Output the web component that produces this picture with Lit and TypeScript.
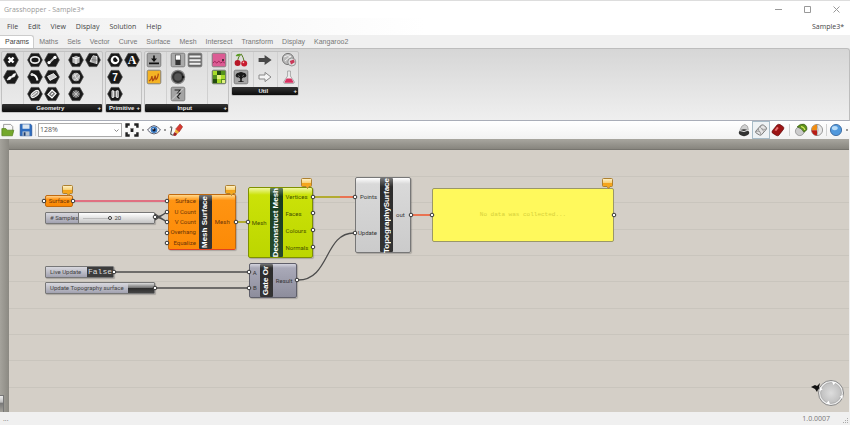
import { LitElement, html, svg, css, nothing } from "lit";
import { customElement, property } from "lit/decorators.js";

const hexGlyphs: Record<string, unknown> = {
  cross: svg`<path d="M5.5 5.5l5 5M10.5 5.5l-5 5" stroke="#fff" stroke-width="2.4"/>`,
  needle: svg`<path d="M4 11l2-3 3-1 1.4-2 2.4-.4-1.2 3-3 1-1.4 1.8z" fill="#fff" stroke="#fff" stroke-width=".6"/>`,
  ring: svg`<ellipse cx="8" cy="8" rx="4.4" ry="3.1" fill="none" stroke="#e8e8e8" stroke-width="1.7"/>`,
  line: svg`<path d="M5 11l6-6" stroke="#ccc" stroke-width="1.8"/><circle cx="5" cy="10.6" r="1.6" fill="#fff"/><circle cx="11" cy="5.4" r="1.6" fill="#fff"/>`,
  arc: svg`<path d="M4.5 5.5q5 0 6 6" fill="none" stroke="#fff" stroke-width="2"/><circle cx="5" cy="5.4" r="1.5" fill="#ddd"/>`,
  plane: svg`<path d="M3.6 7.4l6-2.8 3 3.4-6.6 3.4z" fill="#ccc" stroke="#fff" stroke-width=".8"/>`,
  orbit: svg`<ellipse cx="8" cy="8" rx="4.6" ry="2.5" transform="rotate(-38 8 8)" fill="#999" stroke="#fff"/><path d="M5 10l5-4" stroke="#fff"/>`,
  diamond: svg`<path d="M8 4l4 3.6L8 12 4 8.4z" fill="#777" stroke="#fff" stroke-width="1.2"/><path d="M7 8.6l2-1.4" stroke="#fff" stroke-width="1.2"/>`,
  box: svg`<path d="M4.4 5.4L8 3.8l3.6 1.4v5.2L8 12.2l-3.6-1.8z" fill="#bbb"/><path d="M4.4 5.4L8 6.8l3.6-1.6M8 6.8v5.2" fill="none" stroke="#fff" stroke-width=".9"/>`,
  sheet: svg`<path d="M5 9.6l3-5.8 4 .8v7z" fill="#bbb" stroke="#fff" stroke-width=".8"/><path d="M8 4v7M10 4.4v7M6.6 7.6l5.4.6" stroke="#555" stroke-width=".5"/>`,
  sphere: svg`<circle cx="8" cy="8" r="4.2" fill="#aaa"/><path d="M5 7.5q3-1 4.4-3.4M6 11q4-1 5.6-4.6M6.6 4.5q.4 4 3.6 7" fill="none" stroke="#eee" stroke-width=".8"/>`,
  grid: svg`<circle cx="8" cy="8" r="3.8" fill="#666"/><path d="M4.4 8h7.2M8 4.4v7.2M5.4 5.4l5.2 5.2M10.6 5.4l-5.2 5.2" stroke="#ccc" stroke-width=".8"/>`,
  half: svg`<circle cx="8" cy="8" r="4.3" fill="#fff"/><path d="M8.4 5.2a2.4 2.4 0 1 0 2.4 3z" fill="#111"/>`,
  letter: svg`<text x="8" y="12.2" text-anchor="middle" font-family="Liberation Serif, serif" font-size="12" font-weight="700" fill="#fff">A</text>`,
  seven: svg`<text x="8" y="11.8" text-anchor="middle" font-family="Liberation Sans, sans-serif" font-size="10" font-weight="700" fill="#fff">7</text>`,
  domain: svg`<path d="M5 4.8h1.6v6.6H5zM9.6 4.8h1.6v6.6H9.6z" fill="#777" stroke="#fff" stroke-width=".9"/><path d="M8 5v6" stroke="#fff" stroke-width=".8"/>`,
};

const tile = (fill: string, inner: unknown) => svg`<rect x="1.2" y="1.2" width="13.6" height="13.6" rx="1.4" fill=${fill} stroke="#777" stroke-width=".9"/>${inner}`;

const plainGlyphs: Record<string, unknown> = {
  button: tile("#a4a4a4", svg`<path d="M7.2 3.5h1.6v3H11L8 10 5 6.5h2.2zM3 10.6h10v1.6H3z" fill="#111"/>`),
  graph: tile("#f4b324", svg`<path d="M3 12q2.4-1 3-5l.6 4.6q2-1 2.6-5l.8 4q1.6-1 2.4-6" fill="none" stroke="#b04a10" stroke-width="1.2"/>`),
  toggle: tile("#aaa", svg`<rect x="5.4" y="3" width="5.2" height="5" fill="#fff" stroke="#333" stroke-width=".6"/><rect x="5.4" y="8" width="5.2" height="5" fill="#333"/>`),
  list: tile("#666", svg`<path d="M2.4 4.6h11.2M2.4 8.2h11.2M2.4 11.8h11.2" stroke="#eee" stroke-width="2"/>`),
  knob: svg`<circle cx="8" cy="8" r="6.6" fill="#333" stroke="#888" stroke-width="1.3"/><circle cx="8" cy="8" r="3.8" fill="#555"/><path d="M12 6.6l3 1.4-3 1.4z" fill="#111"/>`,
  script: tile("#a4a4a4", svg`<path d="M4.6 4h5.6L7.6 7.2h2.6L7.4 10.6l2 2" fill="none" stroke="#222" stroke-width="1.1"/><path d="M2 13.6l11-11" stroke="#ddd" stroke-width=".8"/>`),
  swatch: tile("#dc5c94", svg`<path d="M1.8 11l2-1.6 2 1.6 2-1.8 2 1.8 2-1.4 2 1.4" fill="none" stroke="#a02458"/><circle cx="12" cy="8" r="1" fill="#222"/>`),
  pixels: tile("#54921c", svg`<path d="M2 2h4v4H2zM10 6h4v4h-4zM6 10h4v4H6z" fill="#a8dc28"/><path d="M6 2h4v4H6zM2 10h4v4H2z" fill="#234c10"/><path d="M6 6h4v4H6zM11 11h3v3h-3z" fill="#e0f080"/>`),
  cherry: svg`<path d="M4.6 10Q5 4 8.4 2.2q2 3 3 8" fill="none" stroke="#527a1c"/><path d="M8 2q-4-1-5.4 2Q6.4 5 8 2z" fill="#589a20"/><circle cx="4.6" cy="11" r="3" fill="#b81828"/><circle cx="11.2" cy="11.4" r="3" fill="#c81c30"/><circle cx="10.4" cy="10.4" r=".8" fill="#fbb"/>`,
  tree: tile("#a6a6a6", svg`<path d="M2.6 7q0-3 3-3.2Q8 2 10.4 3.8q3 .2 3 3.2-1 2-2.6 1.2Q9 9 8.8 10v2.2h1.8v.8H5.4v-.8h1.8V10Q7 9 5.2 8.2 3.6 9 2.6 7z" fill="#1a1a1a"/><path d="M5 6.4l2 1.4M11 6l-2 1.6" stroke="#999" stroke-width=".6"/>`),
  arrowDark: svg`<path d="M1.6 6h6V3l7 5-7 5v-3h-6z" fill="#484848"/>`,
  arrowLight: svg`<path d="M2 6h6V3.4L14 8l-6 4.6V10H2z" fill="#f4f4f4" stroke="#888" stroke-width="1"/>`,
  magnet: svg`<circle cx="7" cy="7" r="5.6" fill="#bbb" stroke="#777"/><path d="M3 5q4-3 7 0M4 9l6-5" stroke="#eee" fill="none"/><circle cx="10.8" cy="10" r="4" fill="#ddd" stroke="#777" stroke-width=".7"/><path d="M10 12.6l3.8-2.4-1-2.6-4 1.4z" fill="#c83858"/>`,
  flask: svg`<path d="M6.6 2h2.8v5l4 6q0 1.4-1.4 1.4H4q-1.4 0-1.4-1.4l4-6z" fill="#eee" stroke="#999" stroke-width=".8"/><path d="M5.6 9.4h4.8l2.2 3.8-1 .6H4.2l-.8-.6z" fill="#d83060"/>`,
};

const toolGlyphs: Record<string, unknown> = {
  open: svg`<path d="M3 7V1.6h8L13.4 4v7H3z" fill="#f8f8f8" stroke="#777" stroke-width=".8"/><path d="M1 14.6V6.4h4.6L7 8.2h7.6L13 14.6z" fill="#74a82c" stroke="#507c18" stroke-width=".8"/>`,
  save: svg`<path d="M1.4 1.4h12L14.6 3v11.6H1.4z" fill="#2c6cc0" stroke="#1c4c94" stroke-width=".8"/><path d="M4 1.6h8v5H4z" fill="#dce6f0"/><path d="M4 9.6h8v5H4z" fill="#b8c4d0"/><path d="M5.4 10.6h2v4h-2z" fill="#1c3c70"/>`,
  zoom: svg`<path d="M1.8 5.4V1.8h3.6M10.6 1.8h3.6v3.6M14.2 10.6v3.6h-3.6M5.4 14.2H1.8v-3.6" fill="none" stroke="#222" stroke-width="2.8"/><path d="M6.4 6.4l3.2 3.2M9.6 6.4L6.4 9.6" stroke="#222" stroke-width="1.6"/>`,
  eye: svg`<path d="M.6 8q7.4-10 14.8 0-7.4 9-14.8 0z" fill="#f4f8fc" stroke="#445" stroke-width="1"/><circle cx="8" cy="7.8" r="3.8" fill="#3c7cc4"/><circle cx="8" cy="7.8" r="1.8" fill="#112"/><circle cx="7" cy="6.6" r=".8" fill="#fff"/>`,
  brush: svg`<path d="M1 5q3-2 2 2t-1 6q2 2 4-1" fill="none" stroke="#222"/><path d="M7.6 7L12.6 1l3 3.4-4.2 6.2z" fill="#d83830" stroke="#882018" stroke-width=".6"/><path d="M8 7l3.4 3.4-1.8 2.2-3.2-2.6z" fill="#f0b038"/><path d="M6.2 10.2l3.2 2.2-1.6 2.2-3 .2z" fill="#a02020"/>`,
  hat: svg`<path d="M3 9q2-7 6-7.4 4 1 4 6.4z" fill="#d0d0d0" stroke="#888" stroke-width=".7"/><ellipse cx="8" cy="11" rx="6" ry="4" fill="#333"/><path d="M3 8.6q5 2.6 10-.6" stroke="#fff" fill="none"/>`,
  wire: svg`<path d="M2 9.4L7.6 3q1.6-1.4 3.2-.6l3 2.4q1 1 .2 2.4L8.6 13.4q-1.2 1-2.6.2L2.4 11.4q-1-.8-.4-2z" fill="#e4e4e4" stroke="#777" stroke-width="1.1"/><path d="M7.6 3q-.8 2.4 1.2 3.6 2 1.2 5 .4M2 9.6q3-1 4.6.4 1.2 1.2 1.2 3.4M5 6q0 3 1.6 4M8.8 6.6l2.6 3.2" fill="none" stroke="#888" stroke-width=".9"/>`,
  solid: svg`<path d="M1.4 9L6.8 2.4q1.8-1.4 3.6-.6l3.6 2.4q1.2 1.2.4 2.8L9 14q-1.4 1.2-3 .2L1.8 11.6Q.6 10.4 1.4 9z" fill="#9c1414" stroke="#500" stroke-width=".7"/><path d="M4 8.4l3-4 1.8 1.4L6 9.2z" fill="#e87070"/>`,
  preview: svg`<circle cx="6.6" cy="9.4" r="5" fill="#ccc" stroke="#777" stroke-width=".7"/><path d="M3.6 4.4Q7 .4 11.6 1.4q4 2 3 6.6L11.4 10.6Q9 6 3.6 4.4z" fill="#5c9018" stroke="#2c4c08" stroke-width=".7"/><path d="M8 4q4 1 4.4 4" stroke="#d4e860" fill="none" stroke-width="1.4"/>`,
  beach: svg`<circle cx="8" cy="8" r="6.4" fill="#e8e8e8" stroke="#777" stroke-width=".8"/><path d="M8 1.8v6.4H1.8A6.2 6.2 0 0 1 8 1.8z" fill="#f08c10"/><path d="M8 8.2v6A6.2 6.2 0 0 1 1.8 8.2z" fill="#b81c14"/><path d="M8 1.8q2.4 6 0 12.4" fill="none" stroke="#777" stroke-width=".6"/>`,
  globe: svg`<circle cx="8" cy="8" r="6.4" fill="#5098dc" stroke="#2c5c94" stroke-width=".9"/><ellipse cx="6.6" cy="5.8" rx="3.4" ry="2.4" fill="#b8dcf8"/>`,
};

function glyph(name: string) {
  return html`<svg class="icon" viewBox="0 0 16 16" aria-hidden="true">
    ${name in hexGlyphs
      ? svg`<path d="M4.2 1.4h7.6L15.4 8l-3.6 6.6H4.2L.6 8z" fill="#191919" stroke="#444" stroke-width=".7"/>${hexGlyphs[name]}`
      : plainGlyphs[name] ?? toolGlyphs[name]}
  </svg>`;
}

const groups = [
  { title: "Geometry", sets: [[["cross", "needle"]], [["ring", "arc", "orbit"], ["line", "plane", "diamond"]], [["box", "sphere", "grid"], ["sheet"]]] },
  { title: "Primitive", sets: [[["half", "seven", "domain"], ["letter"]]] },
  { title: "Input", sets: [[["button", "graph"]], [["toggle", "knob", "script"], ["list"]], [["swatch", "pixels"]]] },
  { title: "Util", sets: [[["cherry", "tree"]], [["arrowDark", "arrowLight"]], [["magnet", "flask"]]] },
];

const menus = ["File", "Edit", "View", "Display", "Solution", "Help"];
const tabs = ["Params", "Maths", "Sels", "Vector", "Curve", "Surface", "Mesh", "Intersect", "Transform", "Display", "Kangaroo2"];

@customElement("gh-ribbon")
export class GhRibbon extends LitElement {
  static styles = css`
    :host { display: flex; align-items: flex-start; gap: 2px; min-height: 69px; padding: 2px 1px 0; border: 1px solid #bdbdbd; border-left: 0; border-bottom-color: #a9adb8; border-top-right-radius: 3px; background: linear-gradient(#d6d6d6, #efefef); }
    .group { border: 1px solid #c2c2c2; border-radius: 2px; background: linear-gradient(#dcdcdc, #ececec); }
    .sets { display: flex; padding: 0 1px; }
    .set { display: flex; gap: 1px; }
    .set + .set { border-left: 1px solid #d0d0d0; margin-left: 4px; padding-left: 3px; }
    .col { display: flex; flex-direction: column; gap: 1px; margin-bottom: 2px; }
    button { display: block; width: 16px; height: 16px; padding: 0; border: 0; background: none; }
    .icon { display: block; width: 16px; height: 16px; }
    .foot { display: flex; align-items: center; height: 8px; padding: 0 1px; border-radius: 1px; background: linear-gradient(#333, #0c0c0c); color: #eee; font: 700 6px/8px "Liberation Sans", sans-serif; }
    .name { flex: 1; text-align: center; }
  `;
  render() {
    return groups.map((g) => html`<section class="group">
      <div class="sets">${g.sets.map((s) => html`<div class="set">${s.map((c) => html`<div class="col">${c.map((i) => html`<button aria-label=${i}>${glyph(i)}</button>`)}</div>`)}</div>`)}</div>
      <div class="foot"><span class="name">${g.title}</span><span>+</span></div>
    </section>`);
  }
}

@customElement("gh-node")
export class GhNode extends LitElement {
  @property() name = "";
  @property() tone = "grey";
  @property({ type: Array }) inputs: string[] = [];
  @property({ type: Array }) outputs: string[] = [];
  static styles = css`
    :host { display: flex; box-sizing: border-box; border: 1px solid #666; border-radius: 2px; font: 6px/10px Roboto, sans-serif; color: #333; box-shadow: 1px 1px 1px #0003; }
    :host([tone="orange"]) { background: linear-gradient(#ffd98e, #ff9412 10%, #fc8a06); border-color: #c06a10 #c06a10 #e04020; color: #6e3408; }
    :host([tone="lime"]) { background: linear-gradient(#f0f8a0, #cbe208 10%, #bcd600); border-color: #7f9000; color: #455000; }
    :host([tone="grey"]) { background: linear-gradient(#fff, #d9d9d9 8%, #cbcbcb); border-color: #777; }
    :host([tone="slate"]) { background: linear-gradient(#d4d4de, #a9a9b8 12%, #8d8d9c); border-color: #5f5f6a; }
    .side { flex: 1 1 0; display: flex; flex-direction: column; justify-content: space-around; padding: 1px 0; }
    .in { text-align: right; flex-grow: var(--in, 1); padding-right: 3px; }
    .out { text-align: left; flex-grow: var(--out, 1); padding-left: 3px; }
    .strip { display: grid; place-items: center; flex: none; width: 13px; border-radius: 1px; background: linear-gradient(#777, #2c2c2c 12%, #333); color: #fff; }
    :host([tone="lime"]) .strip { background: linear-gradient(#668060, #183c20 12%, #26482c); }
    .title { writing-mode: vertical-rl; transform: rotate(180deg); white-space: nowrap; font: 700 8px/12px "Liberation Sans", sans-serif; }
  `;
  render() {
    return html`<div class="side in">${this.inputs.map((t) => html`<span>${t}</span>`)}</div>
      <div class="strip"><span class="title">${this.name}</span></div>
      <div class="side out">${this.outputs.map((t) => html`<span>${t}</span>`)}</div>`;
  }
}

const ports = [[44, 62], [73, 62], [155, 78], [167, 62], [167, 73], [167, 83], [167, 94], [167, 104], [236, 83], [248, 83], [313, 58], [313, 74], [313, 91], [313, 108], [355, 58], [355, 94], [411, 76], [432, 76], [614, 76], [297, 141], [249, 133], [249, 149], [114, 133], [155, 149]];
const balloons = [[62, 46], [225, 46], [301, 39], [602, 39]];
const rows = [37, 63, 90, 116, 142, 169, 195, 221, 248];

@customElement("gh-canvas")
export class GhCanvas extends LitElement {
  static styles = css`
    :host { display: block; position: relative; overflow: hidden; background: #d4cfc7; }
    .top { height: 11px; background: linear-gradient(#a8a69f, #87857e); border-bottom: 1px solid #77756f; box-sizing: border-box; }
    .left { position: absolute; left: 0; top: 0; bottom: 0; width: 9px; background: linear-gradient(90deg, #a5a39c, #8b8982); }
    .handle { position: absolute; left: 0; bottom: 0; width: 4px; height: 17px; box-sizing: border-box; border: solid #777; border-width: 1px 1px 0 0; background: linear-gradient(#eee, #bbb 40%, #777 42%, #a5a39c); }
    .wires { position: absolute; inset: 0; width: 100%; height: 100%; fill: none; }
    .wire { stroke: #4c4c4c; stroke-width: 1.3; }
    .pink, .hot, .olive { stroke-width: 1.5; }
    .pink { stroke: #e4506a; }
    .hot { stroke: #f0562c; }
    .olive { stroke: #a8a000; }
    .item { position: absolute; box-sizing: border-box; }
    .pin { border: 1px solid #c06a10; border-radius: 2px; background: linear-gradient(#ffd08a, #ff9412 35%, #fa8804); color: #6e3408; text-align: center; }
    .pin, .bar { font: 6px/10px Roboto, sans-serif; }
    .bar { display: flex; align-items: stretch; border: 1px solid #777; border-radius: 1px; background: linear-gradient(#d8d8de, #a2a2b0); color: #444; padding: 0; box-shadow: 1px 1px 1px #0003; }
    .caption { flex: 1; text-align: left; padding-left: 4px; white-space: nowrap; }
    .rail { display: flex; width: 75px; background: linear-gradient(#fff, #c4c4c4); border-left: 1px solid #777; }
    .range { appearance: none; flex: 1; min-width: 0; height: 10px; margin: 0 0 0 4px; background: linear-gradient(#0000 5px, #bbb 5px, #bbb 6px, #0000 6px); }
    .range::-webkit-slider-thumb { appearance: none; width: 4px; height: 4px; border: 1px solid #333; border-radius: 2px; background: #fff; }
    .amount { width: 40px; padding-left: 2px; color: #444; }
    .state { width: 26px; background: #3c3c3c; color: #ddd; text-align: center; font: 8px/10px "Liberation Mono", monospace; }
    .push { width: 26px; background: linear-gradient(#ddd, #777 45%, #2c2c2c 50%, #444); }
    .panel { border: 1px solid #9a9768; border-radius: 2px; background: #fff95c; color: #d6d03a; display: grid; place-items: center; font: 6px/8px "Liberation Mono", monospace; }
    .compass { position: absolute; right: 3px; bottom: 4px; width: 36px; height: 30px; }
    .surface { left: 45px; top: 56px; width: 28px; height: 12px; }
    .samples { left: 45px; top: 73px; width: 110px; height: 12px; }
    .live { left: 45px; top: 127px; width: 69px; height: 12px; }
    .update { left: 45px; top: 143px; width: 110px; height: 12px; }
    .mesh { left: 168px; top: 55px; width: 68px; height: 56px; --in: 4; --out: 3; }
    .decon { left: 248px; top: 48px; width: 65px; height: 71px; --in: 2; --out: 3; }
    .topo { left: 355px; top: 38px; width: 56px; height: 76px; --in: 3; --out: 2; }
    .gate { left: 249px; top: 124px; width: 48px; height: 35px; --in: 1; --out: 3; }
    .note { left: 432px; top: 49px; width: 182px; height: 54px; }
  `;
  render() {
    return html`
      <div class="top"></div>
      <div class="left"></div>
      <div class="handle"></div>
      <svg class="wires">
        <g stroke="#c9c5bd">${rows.map((y) => svg`<line x1="9" x2="100%" y1=${y + 0.5} y2=${y + 0.5}/>`)}</g>
        <path class="pink" d="M75 62H166"/>
        <path class="wire" d="M155 78Q160 78 167 73M155 78Q160 78 167 83M155 75L167 83M155 81L167 73M114 133H248M156 149H248M298 141C330 141 324 94 354 94"/>
        <path class="olive" d="M237 83H248M314 58H340"/>
        <path class="hot" d="M340 58H355M412 76H432"/>
      </svg>
      <div class="item pin surface">Surface</div>
      <label class="item bar samples"><span class="caption"># Samples</span><span class="rail"><input class="range" type="range" min="0" max="20" .value=${"20"} /><span class="amount">20</span></span></label>
      <button class="item bar live"><span class="caption">Live Update</span><span class="state">False</span></button>
      <button class="item bar update"><span class="caption">Update Topography surface</span><span class="push"></span></button>
      <gh-node class="item mesh" tone="orange" name="Mesh Surface" .inputs=${["Surface", "U Count", "V Count", "Overhang", "Equalize"]} .outputs=${["Mesh"]}></gh-node>
      <gh-node class="item decon" tone="lime" name="Deconstruct Mesh" .inputs=${["Mesh"]} .outputs=${["Vertices", "Faces", "Colours", "Normals"]}></gh-node>
      <gh-node class="item topo" tone="grey" name="TopographySurface" .inputs=${["Points", "Update"]} .outputs=${["out"]}></gh-node>
      <gh-node class="item gate" tone="slate" name="Gate Or" .inputs=${["A", "B"]} .outputs=${["Result"]}></gh-node>
      <div class="item panel note">No data was collected...</div>
      <svg class="wires" pointer-events="none">
        <defs><linearGradient id="amber" x2="0" y2="1"><stop offset="0" stop-color="#fff3cc"/><stop offset=".45" stop-color="#f8d070"/><stop offset=".5" stop-color="#f4a41c"/><stop offset="1" stop-color="#f8ac20"/></linearGradient></defs>
        ${ports.map(([x, y]) => svg`<circle cx=${x} cy=${y} r="1.8" fill="#fff" stroke="#333"/>`)}
        ${balloons.map(([x, y]) => svg`<path transform=${`translate(${x} ${y})`} d="M1.5.5h8q1 0 1 1v6q0 1-1 1H8L6.5 10.5 5 8.5H1.5q-1 0-1-1v-6q0-1 1-1z" fill="url(#amber)" stroke="#ad8030"/>`)}
      </svg>
      <svg class="compass" viewBox="0 0 36 30">
        <defs><radialGradient id="dial"><stop offset="0" stop-color="#ddd"/><stop offset="1" stop-color="#c0c0c0"/></radialGradient></defs>
        <path d="M1 9l4-2 2 1 3-3-1 4 1 2-2 .5-1 2.5-2-3z" fill="#111"/>
        <circle cx="21" cy="15" r="12.5" fill="#eee" stroke="#888"/>
        <circle cx="21" cy="15" r="10.4" fill="url(#dial)" stroke="#aaa" stroke-width=".8"/>
        <path d="M22 3.6l4 .6-2.6 2.8zM33 17l-.6 4-2.6-2.4zM20 26.4l-4-.8 2.8-2.8zM9.4 13l.8-4 2.4 2.6z" fill="#fff"/>
      </svg>`;
  }
}

@customElement("app-root")
export class AppRoot extends LitElement {
  static styles = css`
    :host { display: flex; flex-direction: column; min-height: 100vh; box-sizing: border-box; border-top: 1px solid #ddd; background: #f0f0f0; font: 7px/10px "Open Sans", sans-serif; color: #444; }
    button { font: inherit; color: inherit; border: 0; background: none; padding: 0; }
    .title { display: flex; align-items: center; justify-content: space-between; height: 17px; padding: 0 10px 0 4px; background: #fff; color: #999; }
    .window { display: flex; gap: 22px; }
    .window svg { display: block; width: 7px; height: 7px; fill: none; stroke: #999; }
    .menu { display: flex; align-items: center; gap: 10px; height: 17px; padding: 0 6px 0 7px; background: linear-gradient(90deg, #f0f0f0, #fff 50%); }
    .doc { margin-left: auto; }
    .tabs { display: flex; align-items: center; height: 13px; font: 7px/10px "Liberation Sans", sans-serif; color: #777; }
    .tabs button { height: 13px; padding: 0 4px 0 5px; }
    .tabs .active { background: #fff; border: 1px solid #ccc; border-width: 1px 1px 0 0; border-radius: 0 3px 0 0; color: #444; }
    .tools { display: flex; align-items: center; gap: 2px; height: 18px; padding: 0 1px; background: linear-gradient(#fff, #f2f2f2); }
    .icon { display: block; width: 14px; height: 14px; }
    .save { margin-left: 2px; }
    .sep { width: 1px; height: 12px; background: #d0d0d0; }
    .wide { margin: 0 2px; }
    .zoomlevel { appearance: none; width: 84px; height: 14px; box-sizing: border-box; padding: 0 1px; border: 1px solid #aaa; border-radius: 0; color: #555; font: 7px/12px "Open Sans", sans-serif; background: #fff; }
    .combo { display: grid; align-items: center; margin-right: 1px; }
    .combo > * { grid-area: 1 / 1; }
    .chevron { justify-self: end; width: 5px; height: 3px; margin-right: 3px; fill: none; stroke: #888; pointer-events: none; }
    .dot { width: 2px; height: 2px; background: #999; margin: 0 1px; }
    .right { display: flex; align-items: center; gap: 2px; margin-left: auto; }
    .framed { padding: 1px; outline: 1px solid #a8bcc8; background: #eef2f4; }
    gh-canvas { flex: 1; margin-right: 1px; }
    .status { display: flex; align-items: center; justify-content: space-between; height: 13px; padding: 0 1px 0 3px; color: #777; }
    .version { display: flex; align-items: flex-end; gap: 13px; }
    .grip { width: 6px; height: 6px; fill: #aaa; }
  `;
  private tool(name: string, extra = "") {
    return html`<button class=${extra || nothing} aria-label=${name}>${glyph(name)}</button>`;
  }
  render() {
    return html`
      <header class="title"><span>Grasshopper - Sample3*</span>
        <div class="window">
          <button aria-label="Minimize"><svg viewBox="0 0 7 7"><path d="M0 3.5h7"/></svg></button>
          <button aria-label="Maximize"><svg viewBox="0 0 7 7"><path d="M.5.5h6v6h-6z"/></svg></button>
          <button aria-label="Close"><svg viewBox="0 0 7 7"><path d="M.5.5l6 6M6.5.5l-6 6"/></svg></button>
        </div>
      </header>
      <nav class="menu">${menus.map((m) => html`<button>${m}</button>`)}<span class="doc">Sample3*</span></nav>
      <nav class="tabs">${tabs.map((t, i) => html`<button class=${i ? nothing : "active"}>${t}</button>`)}</nav>
      <gh-ribbon></gh-ribbon>
      <div class="tools">
        ${this.tool("open")}${this.tool("save", "save")}
        <span class="sep"></span>
        <div class="combo"><select class="zoomlevel" aria-label="Zoom level"><option>128%</option></select>
          <svg class="chevron" viewBox="0 0 5 3"><path d="M.5.5l2 2 2-2"/></svg></div>
        ${this.tool("zoom")}<span class="dot"></span>${this.tool("eye")}<span class="dot"></span>${this.tool("brush")}
        <div class="right">
          ${this.tool("hat")}${this.tool("wire", "framed")}${this.tool("solid")}
          <span class="sep wide"></span>${this.tool("preview")}${this.tool("beach")}
          <span class="sep"></span>${this.tool("globe")}<span class="dot"></span>
        </div>
      </div>
      <gh-canvas></gh-canvas>
      <footer class="status"><span>...</span><span class="version">1.0.0007<svg class="grip" viewBox="0 0 6 6"><path d="M4 0h1v1H4zM2 2h1v1H2zM4 2h1v1H4zM0 4h1v1H0zM2 4h1v1H2zM4 4h1v1H4z"/></svg></span></footer>`;
  }
}
